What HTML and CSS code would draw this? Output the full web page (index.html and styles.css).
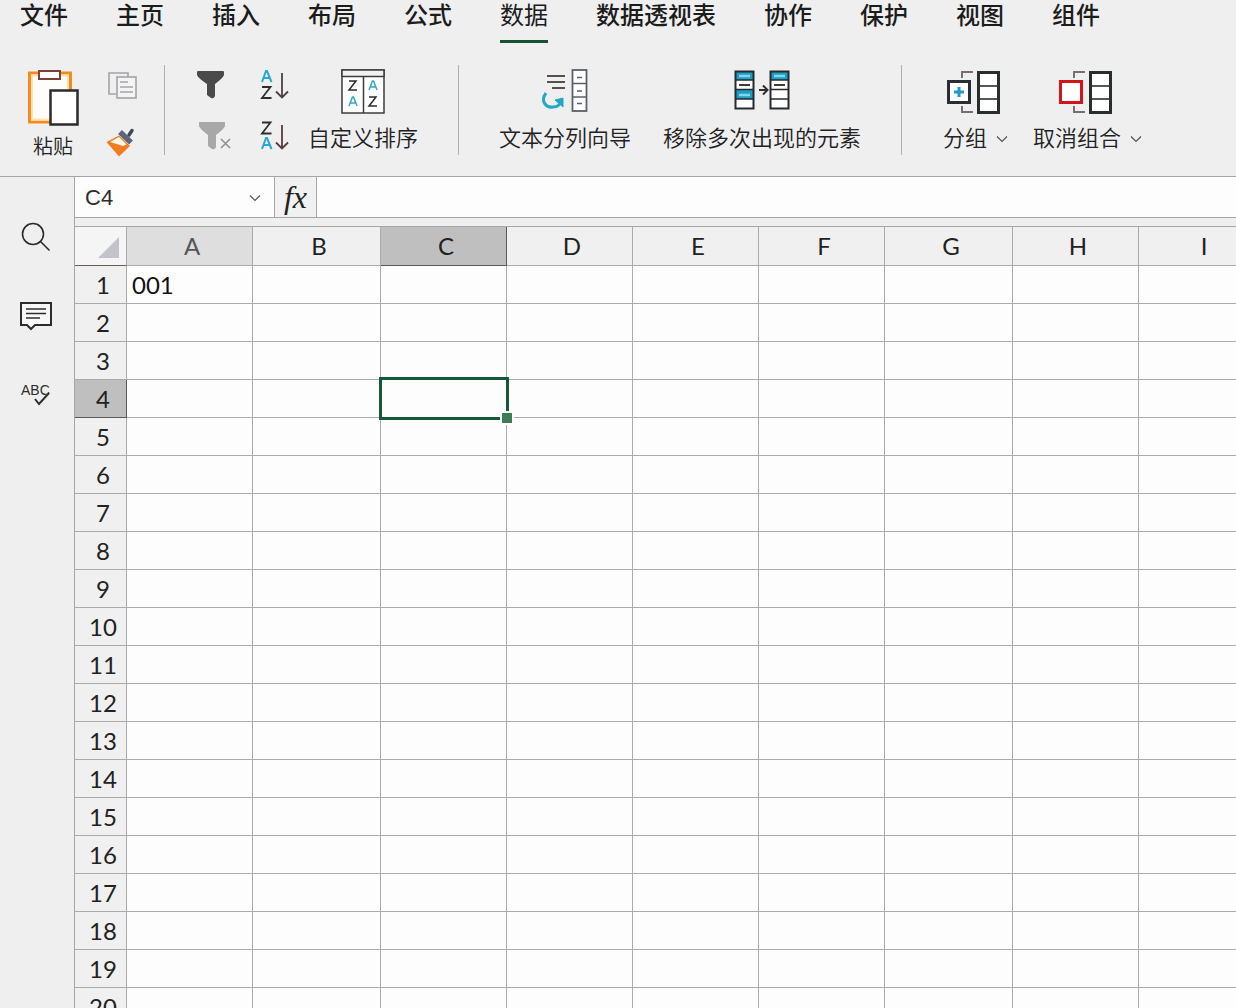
FILE: index.html
```html
<!DOCTYPE html>
<html lang="zh-CN">

<head>
    <meta charset="UTF-8">
    <meta name="viewport" content="width=device-width, initial-scale=1.0">
    <title>数据</title>
    <link rel="stylesheet" href="styles.css">
</head>

<body>
    <nav class="menu">
        <a href="#">文件</a>
        <a href="#">主页</a>
        <a href="#">插入</a>
        <a href="#">布局</a>
        <a href="#">公式</a>
        <a href="#" class="current">数据</a>
        <a href="#">数据透视表</a>
        <a href="#">协作</a>
        <a href="#">保护</a>
        <a href="#">视图</a>
        <a href="#">组件</a>
    </nav>

    <div class="ribbon">
        <div class="group clipboard">
            <button class="tool paste">
                <svg width="54" height="58" viewBox="0 0 54 58">
                    <rect x="3.500" y="4" width="41" height="49" fill="#fffdfa" stroke="#f58a1f" stroke-width="3" />
                    <rect x="6" y="6.500" width="36" height="44" fill="none" stroke="#fde3b0" stroke-width="2" />
                    <rect x="13" y="2" width="21" height="8" fill="#fff" stroke="#7b4038" stroke-width="2" />
                    <rect x="24.500" y="21.500" width="27" height="34" fill="#fff" stroke="#2b2b2e" stroke-width="2.500" />
                </svg>
                <span>粘贴</span>
            </button>
            <div class="stack">
                <button class="small" aria-label="复制">
                    <svg width="32" height="30" viewBox="0 0 32 30" fill="none" stroke="#a4a4a9" stroke-width="1.600">
                        <path d="M10 25H3V4h19v4" />
                        <rect x="11" y="8" width="19" height="21" fill="#f4f4f4" />
                        <path d="M14 13h8M14 18h13M14 23h13" />
                    </svg>
                </button>
                <button class="small" aria-label="格式刷">
                    <svg width="32" height="30" viewBox="0 0 32 30">
                        <path d="M23 8L26 3.500" stroke="#3f4757" stroke-width="3.500" stroke-linecap="round" />
                        <path d="M0.500 15L13 8.500L24 19L13 29.500Z" fill="#f47b20" />
                        <path d="M4 15L13 10L20.500 17.500L17 19Z" fill="#fff6ea" />
                        <path d="M14 5L25 15.500" stroke="#5b6678" stroke-width="5.500" />
                    </svg>
                </button>
            </div>
        </div>

        <div class="group sorting">
            <div class="stack">
                <button class="small" aria-label="筛选">
                    <svg width="36" height="30" viewBox="0 0 36 30">
                        <path d="M1 3Q1 2 2 2H27Q28 2 28 3V6Q27 9 19 15V27Q18 30 15 29L11 26V15Q2 9 1 6Z" fill="#4a4a4a" />
                    </svg>
                </button>
                <button class="small" aria-label="清除筛选">
                    <svg width="36" height="30" viewBox="0 0 36 30">
                        <path d="M3 1H29V5Q28 8 20 14V26Q19 29 16 28L12 25V14Q4 8 3 5Z" fill="#a8a8a8" />
                        <path d="M25 18l9 9M34 18l-9 9" stroke="#8e8e8e" stroke-width="1.500" />
                    </svg>
                </button>
            </div>
            <div class="stack">
                <button class="small" aria-label="升序">
                    <svg width="30" height="30" viewBox="0 0 30 30" fill="none">
                        <path d="M2 13L6 2H7L11.500 13M3.500 9H10" stroke="#2aa7cf" stroke-width="2" />
                        <path d="M2 18H10.500L2 29H11.500" stroke="#2d2d2d" stroke-width="1.800" />
                        <path d="M22 4V28M16 22.500L22 28.500L28 22.500" stroke="#4e4040" stroke-width="1.800" />
                    </svg>
                </button>
                <button class="small" aria-label="降序">
                    <svg width="30" height="30" viewBox="0 0 30 30" fill="none">
                        <path d="M2 1.500H10.500L2 12.500H11.500" stroke="#2d2d2d" stroke-width="1.800" />
                        <path d="M2 28L6 17H7L11.500 28M3.500 24H10" stroke="#2aa7cf" stroke-width="2" />
                        <path d="M22 4V27M16 21.500L22 27.500L28 21.500" stroke="#5e3a3e" stroke-width="1.800" />
                    </svg>
                </button>
            </div>
            <button class="tool">
                <svg width="46" height="46" viewBox="0 0 46 46" fill="none">
                    <rect x="2" y="1" width="42" height="43" fill="#fff" stroke="#3c3c3c" stroke-width="1.500" />
                    <path d="M2 1H44V7.500H2Z" fill="#f1f1f1" stroke="#3c3c3c" stroke-width="1.500" />
                    <path d="M23.500 7V44" stroke="#3c3c3c" stroke-width="1.500" />
                    <path d="M9 12H16L9 21H17M29 28H36L29 37H37" stroke="#2d2d2d" stroke-width="1.500" />
                    <path d="M29 21L32.500 12H33.500L37 21M30.500 18H36M9 37L12.500 28H13.500L17 37M10.500 34H16" stroke="#35a5c8" stroke-width="1.500" />
                </svg>
                <span>自定义排序</span>
            </button>
        </div>

        <div class="group data-tools">
            <button class="tool">
                <svg width="48" height="46" viewBox="0 0 48 46" fill="none">
                    <path d="M6 7H24M6 13H24M11 19H24" stroke="#55504f" stroke-width="2" />
                    <path d="M5 24C-1 32 5 39 12 38C16 38 19 36 20 32" stroke="#21a9c4" stroke-width="3" />
                    <path d="M14 31L22 29V38Z" fill="#21a9c4" stroke="#21a9c4" />
                    <rect x="31.500" y="1" width="14" height="41" fill="#fff" stroke="#5a6069" stroke-width="1.800" />
                    <path d="M31.500 14.500H45.500M31.500 28H45.500M36 8.500h5M36 22h5M36 34.500h5" stroke="#5a6069" stroke-width="1.500" />
                </svg>
                <span>文本分列向导</span>
            </button>
            <button class="tool">
                <svg width="56" height="46" viewBox="0 0 56 46" fill="none">
                    <path d="M1.500 2.500H19.500V39.500H1.500ZM36.500 2.500H54.500V39.500H36.500Z" fill="#fff" />
                    <path d="M1.500 2.500H19.500V11H1.500ZM1.500 21H19.500V30H1.500ZM36.500 2.500H54.500V11H36.500Z" fill="#1e9cc4" />
                    <path d="M5 7H16M5 26H16M40 7H51" stroke="#83d5ec" stroke-width="2.500" />
                    <path d="M1.500 11H19.500M1.500 20.500H19.500M1.500 30H19.500M36.500 11H54.500M36.500 20.500H54.500M36.500 30H54.500" stroke="#262a2c" stroke-width="1.500" />
                    <path d="M5 16H16M40 16H51" stroke="#453a2c" stroke-width="1.800" />
                    <path d="M1.500 2.500H19.500V39.500H1.500ZM36.500 2.500H54.500V39.500H36.500Z" stroke="#262a2c" stroke-width="2" />
                    <path d="M25 21H33M29 16.500L33.500 21L29 25.500" stroke="#342c2c" stroke-width="2" />
                </svg>
                <span>移除多次出现的元素</span>
            </button>
        </div>

        <div class="group outline">
            <button class="tool">
                <svg width="58" height="46" viewBox="0 0 58 46" fill="none">
                    <path d="M26 3H15V9M15 37V43H26" stroke="#77706f" stroke-width="2" />
                    <rect x="1.500" y="12.500" width="21" height="21" fill="#fff" stroke="#2b2c33" stroke-width="3" />
                    <path d="M12 18V28M7 23H17" stroke="#2498c8" stroke-width="3" />
                    <rect x="31.500" y="3.500" width="20" height="40" fill="#fff" stroke="#292d2c" stroke-width="3" />
                    <path d="M33 17H50M33 30H50" stroke="#55585a" stroke-width="2" />
                </svg>
                <span>分组
                    <svg class="chevron" width="12" height="8" viewBox="0 0 12 8"><path d="M1 1.500L6 6.500L11 1.500" /></svg>
                </span>
            </button>
            <button class="tool">
                <svg width="58" height="46" viewBox="0 0 58 46" fill="none">
                    <path d="M26 3H15V9M15 37V43H26" stroke="#77706f" stroke-width="2" />
                    <rect x="1.500" y="12.500" width="21" height="21" fill="#fff" stroke="#d3151b" stroke-width="3" />
                    <rect x="31.500" y="3.500" width="20" height="40" fill="#fff" stroke="#292d2c" stroke-width="3" />
                    <path d="M33 17H50M33 30H50" stroke="#55585a" stroke-width="2" />
                </svg>
                <span>取消组合
                    <svg class="chevron" width="12" height="8" viewBox="0 0 12 8"><path d="M1 1.500L6 6.500L11 1.500" /></svg>
                </span>
            </button>
        </div>
    </div>

    <div class="workspace">
        <aside class="sidebar">
            <button aria-label="搜索">
                <svg width="32" height="32" viewBox="0 0 32 32" fill="none" stroke="#2c2c2c" stroke-width="1.600">
                    <circle cx="13" cy="12" r="10.500" />
                    <path d="M20.500 19.500L29.500 28.500" />
                </svg>
            </button>
            <button aria-label="批注">
                <svg width="32" height="32" viewBox="0 0 32 32" fill="none" stroke="#2c2c2c" stroke-width="2">
                    <path d="M1 3H31V25H15L11 29L7 25H1Z" fill="#f8f8f8" />
                    <path d="M6 9H26M6 13.500H26M6 18H20" stroke-width="1.600" />
                </svg>
            </button>
            <button aria-label="拼写检查">
                <svg width="32" height="32" viewBox="0 0 32 32">
                    <text class="abc" x="1" y="17">ABC</text>
                    <path d="M15 19L19 27L29 16" fill="none" stroke="#efefef" stroke-width="4" />
                    <path d="M15 21L19 26L29 15" fill="none" stroke="#2c2c2c" stroke-width="2" />
                </svg>
            </button>
        </aside>

        <main class="sheet">
            <div class="formula-bar">
                <div class="name-box">
                    <input type="text" value="C4" aria-label="名称框">
                    <button aria-label="选择名称">
                        <svg class="chevron" width="12" height="8" viewBox="0 0 12 8"><path d="M1 1.500L6 6.500L11 1.500" /></svg>
                    </button>
                </div>
                <button class="fx">fx</button>
                <input type="text" class="formula" aria-label="编辑栏">
            </div>

            <div class="grid-wrap">
                <table class="grid">
                    <colgroup>
                        <col class="col-head">
                        <col>
                        <col class="wide">
                        <col>
                        <col>
                        <col>
                        <col>
                        <col class="wide">
                        <col>
                        <col>
                    </colgroup>
                    <thead>
                        <tr>
                            <td class="corner">
                                <svg width="21" height="21" viewBox="0 0 21 21"><path d="M21 0V21H0Z" fill="#c2c3c9" /></svg>
                            </td>
                            <th class="hover">A</th>
                            <th>B</th>
                            <th class="selected">C</th>
                            <th>D</th>
                            <th>E</th>
                            <th>F</th>
                            <th>G</th>
                            <th>H</th>
                            <th>I</th>
                        </tr>
                    </thead>
                    <tbody id="rows"></tbody>
                </table>
            </div>
        </main>
    </div>

    <script src="script.js"></script>
</body>

</html>
```
FILE: styles.css
```css
* {
    box-sizing: border-box;
}

body {
    margin: 0;
    height: 100vh;
    display: flex;
    flex-direction: column;
    overflow: hidden;
    background-color: #efefef;
    color: #222;
    font-family: "Liberation Sans", "Noto Sans CJK SC", sans-serif;
}

button {
    padding: 0;
    border: none;
    background: none;
    color: inherit;
    font: inherit;
    cursor: pointer;
}

svg {
    display: block;
    flex-shrink: 0;
}

input {
    min-width: 0;
    border: none;
    outline: none;
    background: none;
    color: #2c2c2c;
    font: inherit;
}

/* menu */
.menu {
    display: flex;
    gap: 48px;
    padding: 0 20px;
}

.menu a {
    padding-bottom: 8px;
    border-bottom: 3px solid transparent;
    color: #1c1c1c;
    font-size: 24px;
    font-weight: 500;
    line-height: 32px;
    text-decoration: none;
    white-space: nowrap;
}

.menu a.current {
    border-color: #14532f;
    font-weight: 400;
}

/* ribbon */
.ribbon {
    display: flex;
    padding: 22px 0 21px;
}

.group {
    display: flex;
    align-items: flex-start;
    height: 90px;
    padding: 4px 40px;
    border-right: 1px solid #b0b0b0;
}

.group:last-child {
    border-right: none;
}

.clipboard {
    gap: 26px;
    padding: 4px 26px;
}

.sorting {
    gap: 28px;
    padding-left: 31px;
}

.sorting .tool {
    margin-left: -10px;
}

.data-tools {
    gap: 32px;
}

.outline {
    gap: 25px;
    padding-left: 41px;
}

.tool {
    display: flex;
    flex-direction: column;
    align-items: center;
    gap: 9px;
    font-size: 22px;
    font-weight: 350;
    line-height: 30px;
    white-space: nowrap;
}

.tool span {
    display: flex;
    align-items: center;
    gap: 9px;
}

.paste {
    gap: 5px;
    font-size: 20px;
}

.stack {
    display: flex;
    flex-direction: column;
    gap: 22px;
}

.clipboard .stack {
    gap: 28px;
}

.chevron path {
    fill: none;
    stroke: #555;
    stroke-width: 1.2;
}

/* workspace */
.workspace {
    flex: 1;
    display: flex;
    min-height: 0;
    border-top: 1px solid #a6a6a6;
}

.sidebar {
    display: flex;
    flex-direction: column;
    align-items: center;
    gap: 46px;
    width: 75px;
    padding: 45px 2px 0 0;
    border-right: 1px solid #a6a6a6;
}

.abc {
    fill: #2c2c2c;
    font-family: "Liberation Sans", sans-serif;
    font-size: 14px;
}

.sheet {
    flex: 1;
    display: flex;
    flex-direction: column;
    min-width: 0;
}

.formula-bar {
    display: flex;
    height: 41px;
    border-bottom: 1px solid #a6a6a6;
    background-color: #fdfdfd;
    font-size: 22px;
}

.name-box {
    display: flex;
    align-items: center;
    width: 200px;
    padding: 2px 13px 0 8px;
    border-right: 1px solid #a6a6a6;
}

.name-box input {
    flex: 1;
}

.fx {
    width: 42px;
    border-right: 1px solid #a6a6a6;
    background-color: #f1f1f1;
    font-family: "Liberation Serif", serif;
    font-size: 32px;
    font-style: italic;
    line-height: 36px;
}

.formula {
    flex: 1;
    padding: 0 8px;
}

/* grid */
.grid-wrap {
    flex: 1;
    margin-top: 8px;
    border-top: 1px solid #a6a6a6;
    overflow: hidden;
    background-color: #fdfdfd;
}

.grid {
    width: 1190px;
    border-collapse: separate;
    border-spacing: 0;
    table-layout: fixed;
    font-family: Lato, "Noto Sans CJK SC", sans-serif;
    font-size: 24px;
}

.grid col {
    width: 126px;
}

.grid .wide {
    width: 128px;
}

.grid .col-head {
    width: 52px;
}

.grid td,
.grid th {
    height: 38px;
    padding: 0 0 0 5px;
    border-right: 1px solid #a9abad;
    border-bottom: 1px solid #a9abad;
    line-height: 30px;
}

.grid td {
    color: #111;
}

.grid th {
    background-color: #f0f0f0;
    color: #222;
    font-weight: 400;
    text-align: center;
}

.grid thead th,
.grid .corner {
    height: 39px;
}

.grid .corner {
    padding: 2px 7px 0 0;
    border-bottom-color: #66624f;
    background-color: #f5f5f5;
}

.corner svg {
    margin-left: auto;
}

.grid .hover {
    background-color: #dedede;
    color: #555;
}

.grid .selected {
    border-color: #5a5a5a;
    background-color: #bfbfbf;
}

.grid .active {
    position: relative;
}

/* frame and fill handle lie over the neighbouring cell borders */
.active::before {
    content: "";
    position: absolute;
    inset: -3px -3px -3px -2px;
    border: 3px solid #17583b;
}

.active::after {
    content: "";
    position: absolute;
    right: -8px;
    bottom: -8px;
    box-sizing: content-box;
    width: 10px;
    height: 10px;
    border: 2px solid #fdfdfd;
    background-color: #3c7d55;
    background-clip: padding-box;
}
```
FILE: script.js
```javascript
const ROW_COUNT = 20;
const COLUMNS = ['A', 'B', 'C', 'D', 'E', 'F', 'G', 'H', 'I'];
const values = { A1: '001' };
const active = { column: 'C', row: 4 };

const body = document.getElementById('rows');

for (let row = 1; row <= ROW_COUNT; row++) {
    const tr = document.createElement('tr');
    const head = document.createElement('th');
    head.textContent = row;
    if (row === active.row) {
        head.className = 'selected';
    }
    tr.appendChild(head);

    COLUMNS.forEach(column => {
        const td = document.createElement('td');
        td.textContent = values[column + row] || '';
        if (column === active.column && row === active.row) {
            td.className = 'active';
        }
        tr.appendChild(td);
    });

    body.appendChild(tr);
}
```
